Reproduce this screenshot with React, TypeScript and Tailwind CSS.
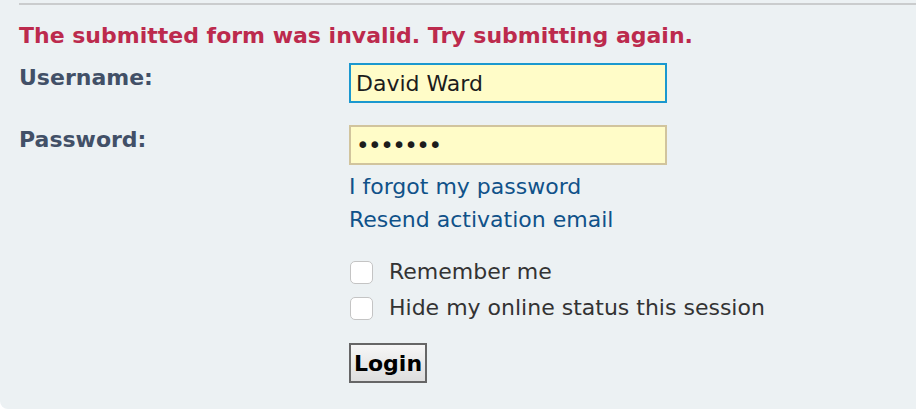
import React from 'react'

export default function App() {
  return (
    <div className="w-[916px] h-[418px] bg-white font-['DejaVu_Sans',Verdana,sans-serif]">
      <div className="h-[409px] bg-[#ecf1f3] rounded-bl-[8px] pl-[19px] pt-[3px]">
        <div className="h-[2px] bg-[#cacccd]" />
        <p className="mt-[18px] text-[22px] leading-[26px] font-bold text-[#bc2a4d]">
          The submitted form was invalid. Try submitting again.
        </p>

        <div className="flex mt-[14px]">
          <label className="w-[330px] pt-[2px] text-[22px] leading-[26px] font-bold text-[#425067]">
            Username:
          </label>
          <input
            type="text"
            defaultValue="David Ward"
            className="w-[318px] h-[40px] px-[5px] border-2 border-[#1b98cf] bg-[#fffcc8] text-[22px] text-[#1c1c1c] outline-none"
          />
        </div>

        <div className="flex mt-[22px]">
          <label className="w-[330px] pt-[2px] text-[22px] leading-[26px] font-bold text-[#425067]">
            Password:
          </label>
          <div className="flex flex-col">
            <input
              type="password"
              defaultValue="abcdefg"
              className="w-[318px] h-[40px] px-[5px] border-2 border-[#d1c49d] bg-[#fffcc8] text-[23px] tracking-[-1.5px] text-[#1c1c1c] outline-none"
            />
            <a href="#" className="mt-[5px] text-[22px] leading-[33px] text-[#105289]">
              I forgot my password
            </a>
            <a href="#" className="text-[22px] leading-[33px] text-[#105289]">
              Resend activation email
            </a>

            <label className="flex items-center gap-[16px] mt-[18px] text-[22px] leading-[36px] text-[#333]">
              <span className="w-[23px] h-[23px] ml-px rounded-[5px] border border-[#c4c4c4] bg-white" />
              Remember me
            </label>
            <label className="flex items-center gap-[16px] text-[22px] leading-[36px] text-[#333]">
              <span className="w-[23px] h-[23px] ml-px rounded-[5px] border border-[#c4c4c4] bg-white" />
              Hide my online status this session
            </label>

            <div className="mt-[17px]">
              <button className="w-[78px] h-[40px] p-0 border-2 border-[#666] bg-gradient-to-b from-[#f6f6f6] to-[#dedede] text-[22px] font-bold text-black">
                Login
              </button>
            </div>
          </div>
        </div>
      </div>
    </div>
  )
}
